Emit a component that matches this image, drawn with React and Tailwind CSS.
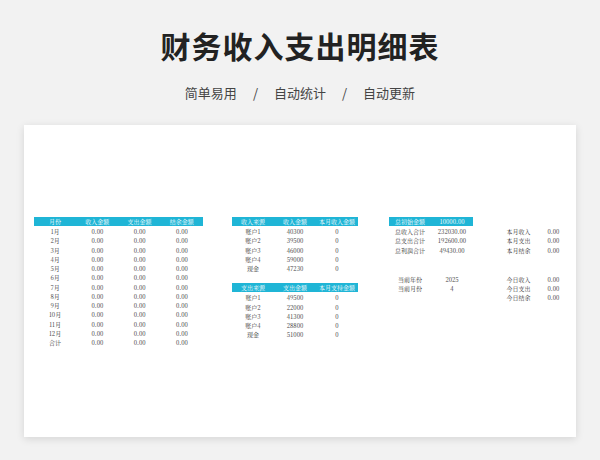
const F = { fontFamily: '"Noto Sans CJK SC", sans-serif' };
const S = { fontFamily: '"Noto Serif CJK SC", "Liberation Serif", "Noto Sans CJK SC", serif' };

const months = ['1月','2月','3月','4月','5月','6月','7月','8月','9月','10月','11月','12月','合计'];

function Head({ cols, className }) {
  return (
    <div className={`flex h-[9px] items-center bg-[#1fb5d6] text-white ${className}`}>
      {cols.map((c, i) => <div key={i} className="flex-1 text-center">{c}</div>)}
    </div>
  );
}

function Row({ cols }) {
  return (
    <div className="flex h-[9.25px] items-center text-[#333]">
      {cols.map((c, i) => <div key={i} className="flex-1 text-center">{c}</div>)}
    </div>
  );
}

export default function App() {
  const inc = [['账户1','40300'],['账户2','39500'],['账户3','46000'],['账户4','59000'],['现金','47230']];
  const exp = [['账户1','49500'],['账户2','22000'],['账户3','41300'],['账户4','28800'],['现金','51000']];
  return (
    <div className="w-[600px] h-[460px] bg-[#f2f2f2] flex flex-col items-center overflow-hidden" style={F}>
      <h1 className="mt-[24px] text-[30px] leading-[42px] font-bold text-[#222] tracking-[1px]">财务收入支出明细表</h1>
      <div className="mt-[17px] flex gap-[16px] text-[13px] text-[#444] leading-[20px]">
        <span>简单易用</span><span>/</span><span>自动统计</span><span>/</span><span>自动更新</span>
      </div>
      <div className="mt-[22px] w-[552px] h-[312px] bg-white shadow-[0_2px_8px_rgba(0,0,0,0.12)] pt-[92px] flex text-[6px]" style={S}>
        <div className="ml-[10px] w-[169px]">
          <Head cols={['月份','收入金额','支出金额','结余金额']} />
          <div className="mt-[1px]">
            {months.map(m => <Row key={m} cols={[m,'0.00','0.00','0.00']} />)}
          </div>
        </div>
        <div className="ml-[29px] w-[126px]">
          <Head cols={['收入来源','收入金额','本月收入金额']} />
          <div className="mt-[1px]">{inc.map(r => <Row key={r[0]} cols={[r[0], r[1], '0']} />)}</div>
          <Head className="mt-[10px]" cols={['支出来源','支出金额','本月支持金额']} />
          <div className="mt-[1px]">{exp.map(r => <Row key={r[0]} cols={[r[0], r[1], '0']} />)}</div>
        </div>
        <div className="ml-[31px] w-[84px]">
          <Head cols={['总初始金额','10000.00']} />
          <div className="mt-[1px]">
            <Row cols={['总收入合计','232030.00']} />
            <Row cols={['总支出合计','192600.00']} />
            <Row cols={['总利润合计','49430.00']} />
          </div>
          <div className="mt-[20px]">
            <Row cols={['当前年份','2025']} />
            <Row cols={['当前月份','4']} />
          </div>
        </div>
        <div className="ml-[28px] w-[70px]">
          <div className="h-[10px]" />
          <Row cols={['本月收入','0.00']} />
          <Row cols={['本月支出','0.00']} />
          <Row cols={['本月结余','0.00']} />
          <div className="h-[20px]" />
          <Row cols={['今日收入','0.00']} />
          <Row cols={['今日支出','0.00']} />
          <Row cols={['今日结余','0.00']} />
        </div>
      </div>
    </div>
  );
}
